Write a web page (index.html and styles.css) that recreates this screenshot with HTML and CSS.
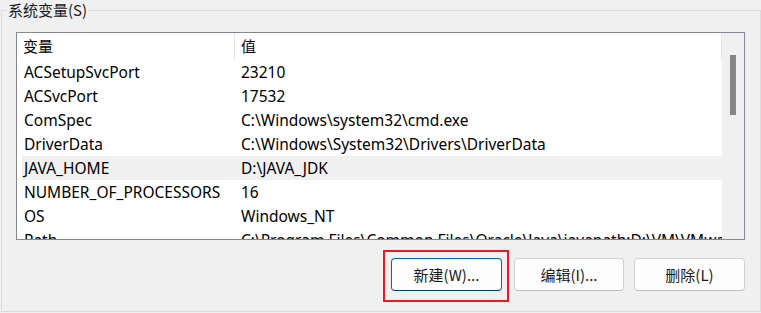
FILE: index.html
```html
<!DOCTYPE html>
<html lang="zh-CN">
<head>
<meta charset="utf-8">
<title>系统变量</title>
<link rel="stylesheet" href="styles.css">
</head>
<body>
<fieldset class="group">
  <legend class="group-title">系统变量(S)</legend>
  <div class="listbox">
    <div class="list-main">
      <div class="list-header">
        <div class="hcell hcell-name">变量</div>
        <div class="hcell hcell-value">值</div>
      </div>
      <div class="rows">
        <div class="row"><div class="cell-name">ACSetupSvcPort</div><div class="cell-value">23210</div></div>
        <div class="row"><div class="cell-name">ACSvcPort</div><div class="cell-value">17532</div></div>
        <div class="row"><div class="cell-name">ComSpec</div><div class="cell-value">C:\Windows\system32\cmd.exe</div></div>
        <div class="row"><div class="cell-name">DriverData</div><div class="cell-value">C:\Windows\System32\Drivers\DriverData</div></div>
        <div class="row row-selected"><div class="cell-name">JAVA_HOME</div><div class="cell-value">D:\JAVA_JDK</div></div>
        <div class="row"><div class="cell-name">NUMBER_OF_PROCESSORS</div><div class="cell-value">16</div></div>
        <div class="row"><div class="cell-name">OS</div><div class="cell-value">Windows_NT</div></div>
        <div class="row"><div class="cell-name">Path</div><div class="cell-value">C:\Program Files\Common Files\Oracle\Java\javapath;D:\VM\VMware Workstation\bin\;C:\Windows\system32</div></div>
      </div>
    </div>
    <div class="scrollbar"><div class="thumb"></div></div>
  </div>
  <div class="buttons">
    <div class="btn-wrap highlighted"><button class="btn btn-primary">新建(W)...</button></div>
    <button class="btn btn-edit">编辑(I)...</button>
    <button class="btn">删除(L)</button>
  </div>
</fieldset>
</body>
</html>
```
FILE: styles.css
```css
html, body {
  margin: 0;
  padding: 0;
  background: #f0f0f0;
  width: 761px;
  height: 313px;
  overflow: hidden;
  font-family: "Noto Sans", "Noto Sans CJK SC", sans-serif;
  font-size: 15px;
  color: #000;
}

.group {
  margin: 0 0 0 1px;
  padding: 12px 15px 20px 14px;
  border: 1px solid #dcdcdc;
  min-width: 0;
}

.group-title {
  margin-left: -9px;
  padding: 0 1px;
  line-height: 20px;
  height: 20px;
  font-family: "Noto Sans CJK SC", sans-serif;
  font-size: 15px;
  color: #1a1a1a;
}

.listbox {
  display: flex;
  box-sizing: border-box;
  width: 729px;
  height: 208px;
  border: 1px solid #828790;
  background: #fff;
  overflow: hidden;
}

.list-main {
  flex: 1;
  min-width: 0;
  overflow: hidden;
}

.list-header {
  display: flex;
  height: 27px;
}

.hcell {
  box-sizing: border-box;
  height: 27px;
  line-height: 26px;
  font-family: "Noto Sans CJK SC", sans-serif;
  padding-left: 6px;
  border-right: 1px solid #e5e5e5;
}

.hcell-name {
  width: 218px;
}

.hcell-value {
  flex: 1;
}

.rows {
  padding-left: 5px;
  font-size: 15.5px;
}

.row {
  display: flex;
  height: 24px;
  line-height: 24px;
  white-space: nowrap;
}

.row-selected {
  background: #f0f0f0;
}

.cell-name {
  box-sizing: border-box;
  width: 219px;
  padding-left: 2px;
  flex: none;
}

.cell-value {
  flex: 1;
  overflow: hidden;
}

.scrollbar {
  width: 22px;
  flex: none;
  background: #f0f0f0;
  padding-top: 22px;
  box-sizing: border-box;
}

.thumb {
  margin-left: 8px;
  width: 6px;
  height: 60px;
  background: #858585;
}

.buttons {
  display: flex;
  justify-content: flex-end;
  gap: 10px;
  margin-top: 18px;
}

.btn-wrap {
  position: relative;
  margin-right: 2px;
}

.highlighted::after {
  content: "";
  position: absolute;
  left: -8px;
  right: -7px;
  top: -8px;
  bottom: -11px;
  border: 2px solid #e81b23;
  pointer-events: none;
}

.btn {
  display: block;
  box-sizing: border-box;
  width: 111px;
  height: 33px;
  margin: 0;
  padding: 0;
  border: 1px solid #d0d0d0;
  border-bottom-color: #bdbdbd;
  border-radius: 4px;
  background: #fdfdfd;
  font-family: "Noto Sans CJK SC", sans-serif;
  font-size: 15px;
  color: #1a1a1a;
}

.btn-edit {
  width: 110px;
}

.btn-primary {
  border: 1px solid #0067c0;
  border-bottom-color: #003e73;
}
```
